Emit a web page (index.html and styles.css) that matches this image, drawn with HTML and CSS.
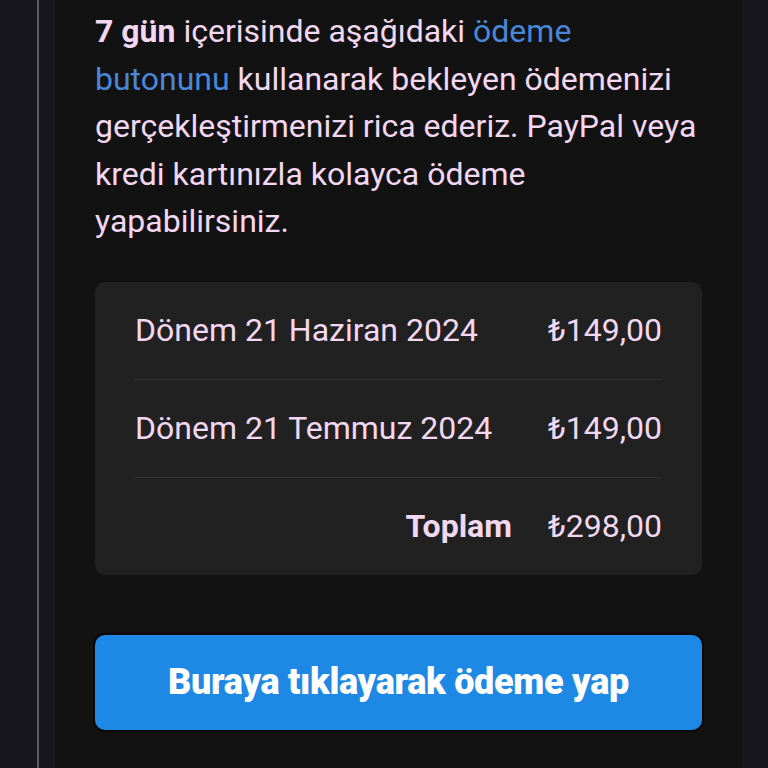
FILE: index.html
```html
<!DOCTYPE html>
<html lang="tr">
<head>
  <meta charset="UTF-8" />
  <meta name="viewport" content="width=device-width, initial-scale=1.0"/>
  <title>Ödeme hatırlatması</title>
  <link rel="stylesheet" href="styles.css">
</head>
<body>
  <div class="frame">
    <div class="mail">
      <p class="intro">
        <strong>7 gün</strong> içerisinde aşağıdaki <a href="#pay">ödeme butonunu</a> kullanarak bekleyen ödemenizi gerçekleştirmenizi rica ederiz. PayPal veya kredi kartınızla kolayca ödeme yapabilirsiniz.
      </p>

      <div class="bill">
        <div class="bill-row">
          <span class="label">Dönem 21 Haziran 2024</span>
          <span class="amount">₺149,00</span>
        </div>
        <div class="bill-row">
          <span class="label">Dönem 21 Temmuz 2024</span>
          <span class="amount">₺149,00</span>
        </div>
        <div class="bill-row total">
          <span class="label">Toplam</span>
          <span class="amount">₺298,00</span>
        </div>
      </div>

      <a id="pay" class="pay-btn" href="#">Buraya tıklayarak ödeme yap</a>
    </div>
  </div>
</body>
</html>
```

FILE: styles.css
```css
:root {
  --outer: #17161c;
  --rule: #5c5b62;
  --bg: #121212;
  --card: #212121;
  --text: #f3d8f2;
  --link: #4a87d9;
  --primary: #1e88e5;
}

body {
  margin: 0;
  height: 768px;
  overflow: hidden;
  background-color: var(--outer);
  font-family: Roboto, 'Noto Sans', sans-serif;
  color: var(--text);
}

.frame {
  margin-left: 37px;
  width: 705px;
  height: 100%;
  border-left: 2px solid var(--rule);
  box-sizing: border-box;
  padding-left: 14px;
}

.mail {
  height: 100%;
  background-color: var(--bg);
  border-left: 2px solid #1c1c1f;
  padding: 8px 40px 0 40px;
}

.intro {
  margin: 0 0 36px;
  font-size: 32px;
  line-height: 47.5px;
}

.intro strong {
  font-weight: 700;
}

.intro a {
  color: var(--link);
  text-decoration: none;
}

.bill {
  background-color: var(--card);
  border-radius: 10px;
  padding: 0 40px;
  margin-bottom: 60px;
}

.bill-row {
  display: grid;
  grid-template-columns: 1fr auto;
  column-gap: 36px;
  align-items: center;
  height: 97px;
  font-size: 32px;
  border-bottom: 1px solid #343434;
}

.bill-row.total {
  border-bottom: none;
}

.bill-row.total .label {
  text-align: right;
  font-weight: 700;
}

.pay-btn {
  display: flex;
  justify-content: center;
  align-items: center;
  height: 95px;
  border-radius: 10px;
  background-color: var(--primary);
  box-shadow: 0 0 0 2px rgba(0, 0, 0, 0.5);
  color: white;
  font-size: 36px;
  font-weight: 900;
  text-decoration: none;
  letter-spacing: -0.3px;
}
```
